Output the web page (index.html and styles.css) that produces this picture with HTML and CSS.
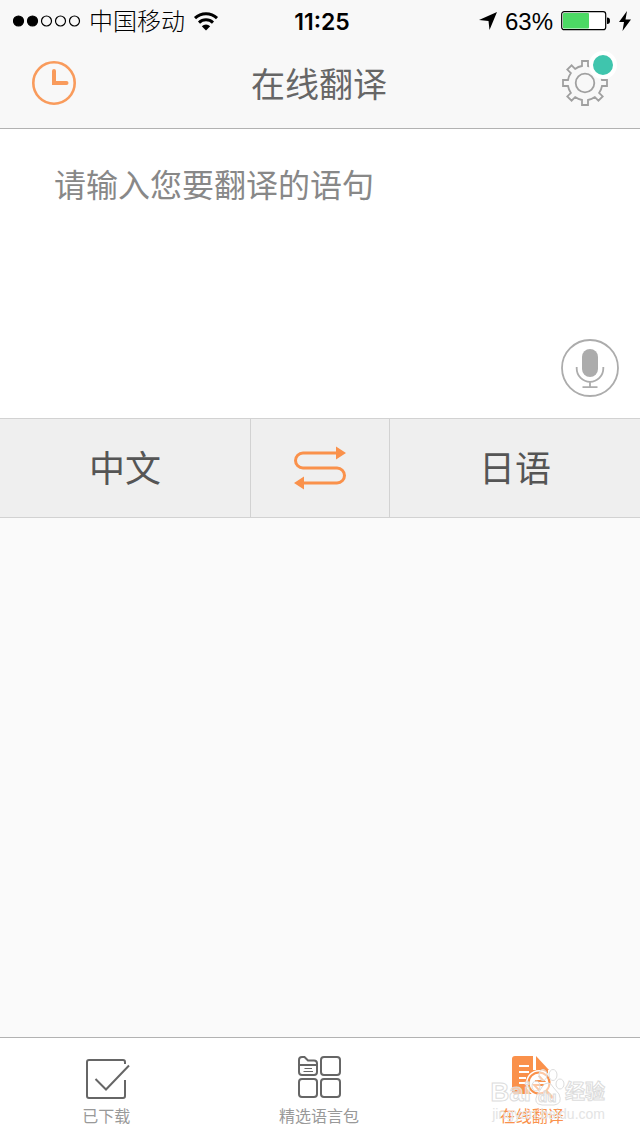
FILE: index.html
```html
<!DOCTYPE html>
<html lang="zh-CN">
<head>
    <meta charset="UTF-8">
    <meta name="viewport" content="width=device-width, initial-scale=1.0">
    <title>在线翻译</title>
    <link rel="stylesheet" href="styles.css">
</head>
<body>

    <header class="header">
        <div class="status">
            <div class="status-left">
                <svg width="68" height="14" viewBox="0 0 68 14" stroke="#000" stroke-width="1.2" fill="none">
                    <circle cx="5.5" cy="7" r="5" fill="#000"/>
                    <circle cx="19.5" cy="7" r="5" fill="#000"/>
                    <circle cx="33.5" cy="7" r="5"/>
                    <circle cx="47.5" cy="7" r="5"/>
                    <circle cx="61.5" cy="7" r="5"/>
                </svg>
                <span class="carrier">中国移动</span>
                <svg width="26" height="20" viewBox="0 0 26 20" fill="none" stroke="#000" stroke-width="3">
                    <path d="M2 7.2A16 16 0 0 1 24 7.2"/>
                    <path d="M6 11.6A10.2 10.2 0 0 1 20 11.6"/>
                    <path d="M13 19.5L8.8 15.2A6 6 0 0 1 17.2 15.2Z" fill="#000" stroke="none"/>
                </svg>
            </div>
            <span class="time">11:25</span>
            <div class="status-right">
                <svg width="18" height="18" viewBox="0 0 18 18"><path d="M18 0L10.5 18L9.5 9L0 8Z"/></svg>
                <span class="percent">63%</span>
                <svg width="50" height="20" viewBox="0 0 50 20">
                    <rect x="0.7" y="0.7" width="44" height="18" rx="2.5" fill="#fff" stroke="#000" stroke-width="1.2"/>
                    <rect x="2" y="2" width="26" height="15.4" rx="1" fill="#4cd964"/>
                    <path d="M46 6.5Q49 6.5 49 9.8T46 13Z"/>
                </svg>
                <svg width="12" height="20" viewBox="0 0 12 20"><path d="M8 0L0 11H5L3.5 20L12 8.5H6.5Z"/></svg>
            </div>
        </div>
        <div class="nav">
            <button class="icon-btn" aria-label="历史">
                <svg width="44" height="44" viewBox="0 0 44 44" fill="none" stroke="#f99b5c">
                    <circle cx="22" cy="22" r="20.7" stroke-width="2.6"/>
                    <path d="M22 10V22H34.5" stroke-width="4" stroke-linecap="round"/>
                </svg>
            </button>
            <h1>在线翻译</h1>
            <button class="icon-btn settings" aria-label="设置">
                <svg width="46" height="46" viewBox="-23 -23 46 46" fill="none" stroke="#a0a0a0" stroke-width="1.8">
                    <circle r="9.3"/>
                    <path d="M-3-17V-22H3V-17A17.3 17.3 0 0 1 9.9-14.1L13.4-17.7L17.7-13.4L14.1-9.9A17.3 17.3 0 0 1 17-3H22V3H17A17.3 17.3 0 0 1 14.1 9.9L17.7 13.4L13.4 17.7L9.9 14.1A17.3 17.3 0 0 1 3 17V22H-3V17A17.3 17.3 0 0 1-9.9 14.1L-13.4 17.7L-17.7 13.4L-14.1 9.9A17.3 17.3 0 0 1-17 3H-22V-3H-17A17.3 17.3 0 0 1-14.1-9.9L-17.7-13.4L-13.4-17.7L-9.9-14.1A17.3 17.3 0 0 1-3-17Z"/>
                </svg>
                <span class="badge"></span>
            </button>
        </div>
    </header>

    <main class="main">
        <div class="entry">
            <textarea class="sentence" aria-label="翻译语句" placeholder="请输入您要翻译的语句"></textarea>
            <button class="mic" aria-label="语音输入">
                <svg width="58" height="58" viewBox="0 0 58 58" fill="none" stroke="#acacac" stroke-width="1.8">
                    <circle cx="29" cy="29" r="28"/>
                    <rect x="21" y="10" width="16" height="28" rx="8" fill="#acacac" stroke="none"/>
                    <path d="M15.7 28V29.5A13.3 13.3 0 0 0 42.3 29.5V28M29 42.8V48M21.5 48.2H36.5"/>
                </svg>
            </button>
        </div>

        <div class="langs">
            <button class="lang">中文</button>
            <button class="swap" aria-label="交换语言">
                <svg width="52" height="44" viewBox="0 0 52 44" fill="none" stroke="#fa914b" stroke-width="3">
                    <path d="M42 7H9A7.5 7.5 0 0 0 9 22H43A7.5 7.5 0 0 1 43 37H10"/>
                    <path d="M42 0.5L52 7L42 13.5ZM10 30.5L0 37L10 43.5Z" fill="#fa914b" stroke="none"/>
                </svg>
            </button>
            <button class="lang">日语</button>
        </div>
    </main>

    <nav class="tabs">
        <a class="tab" href="#">
            <svg width="48" height="44" viewBox="0 0 48 44" fill="none" stroke="#666" stroke-width="2">
                <path d="M43 8V6Q43 4 41 4H7Q5 4 5 6V40Q5 42 7 42H41Q43 42 43 40V24"/>
                <path d="M13.5 23L24 33.5L47 9.5"/>
            </svg>
            <span>已下载</span>
        </a>
        <a class="tab" href="#">
            <svg width="44" height="44" viewBox="0 0 44 44" fill="none" stroke="#666" stroke-width="2">
                <path d="M2 4Q2 1 5 1H7.5L11 4.5H17Q20 4.5 20 7.5V16Q20 19 17 19H5Q2 19 2 16ZM2 9H20"/>
                <path d="M6.5 15.5H16M7.5 12.5H15" stroke-width="1"/>
                <rect x="24" y="1" width="19" height="18" rx="3"/>
                <rect x="2" y="23" width="18" height="18" rx="3"/>
                <rect x="24" y="23" width="19" height="18" rx="3"/>
            </svg>
            <span>精选语言包</span>
        </a>
        <a class="tab active" href="#">
            <svg width="44" height="44" viewBox="0 0 44 44">
                <path d="M5 0H23V14H38V38H5Q2 38 2 35V3Q2 0 5 0Z" fill="#fa914b"/>
                <path d="M26 0L39 14H26Z" fill="#fa914b"/>
                <path d="M9 10H19M9 16H19M9 22H16M9 27H16" stroke="#fff" stroke-width="2"/>
                <circle cx="29" cy="27" r="11" fill="#fff" stroke="#fff" stroke-width="4"/>
                <circle cx="29" cy="27" r="10.5" fill="none" stroke="#fa914b" stroke-width="2"/>
                <path d="M25 25H34L29 20M34 29H24L29 34" fill="none" stroke="#fa914b" stroke-width="1.8"/>
                <path d="M36 35L43 42" stroke="#fa914b" stroke-width="3"/>
            </svg>
            <span>在线翻译</span>
        </a>
        <div class="watermark">
            <div class="mark-name">
                <span>Bai</span>
                <svg width="34" height="38" viewBox="0 0 34 38" fill="#fff" fill-opacity="0.5" stroke="#dcdcdc">
                    <ellipse cx="5" cy="18" rx="4" ry="5"/>
                    <ellipse cx="12" cy="7" rx="4" ry="5.5"/>
                    <ellipse cx="22" cy="7" rx="4" ry="5.5"/>
                    <ellipse cx="29" cy="16" rx="4" ry="5"/>
                    <path d="M17 15Q20 15 22 19L28 26Q32 36 23 37H11Q2 36 6 27L11 19Q13 15 17 15Z"/>
                    <text x="7" y="34" class="mark-du">du</text>
                </svg>
                <span class="mark-cn">经验</span>
            </div>
            <div class="mark-url">jingyan.baidu.com</div>
        </div>
    </nav>

</body>
</html>
```
FILE: styles.css
```css
*{
    box-sizing: border-box;
}

body{
    margin: 0;
    min-height: 100vh;
    display: flex;
    flex-direction: column;
    background: #fafafa;
    font-family: "Noto Sans CJK SC", sans-serif;
}

button{
    padding: 0;
    border: 0;
    background: none;
    font-family: inherit;
    cursor: pointer;
}

svg{
    display: block;
    flex: none;
}

/* cabecera */
.header{
    background: #f8f8f8;
    border-bottom: 1px solid #b2b2b2;
}

.status{
    display: grid;
    grid-template-columns: 1fr auto 1fr;
    align-items: center;
    height: 40px;
    padding: 0 9px 0 13px;
    color: #000;
    font-family: "Liberation Sans", "Noto Sans CJK SC", sans-serif;
    font-size: 24px;
    line-height: 40px;
}

.status-left,
.status-right{
    display: flex;
    align-items: center;
    gap: 8px;
}

.status-right{
    justify-content: flex-end;
}

.carrier{
    padding-top: 2px;
    font-weight: 300;
}

.time{
    padding-top: 2px;
    font-size: 23px;
    font-weight: 600;
    font-family: Inter, "Liberation Sans", sans-serif;
}

.percent{
    padding-top: 2px;
}

.nav{
    display: flex;
    align-items: center;
    justify-content: space-between;
    height: 88px;
    padding: 0 32px 2px;
}

.nav h1{
    margin: 0;
    color: #666;
    font-size: 34px;
    font-weight: 400;
    line-height: 48px;
}

.settings{
    position: relative;
}

.badge{
    position: absolute;
    top: -9px;
    right: -9px;
    width: 28px;
    height: 28px;
    border: 4px solid #fff;
    border-radius: 50%;
    background: #3fc5ad;
}

/* texto a traducir */
.main{
    flex: 1;
}

.entry{
    display: flex;
    flex-direction: column;
    align-items: flex-end;
    padding: 30px 21px 21px 54px;
    background: #fff;
}

.sentence{
    width: 100%;
    height: 180px;
    padding: 0;
    border: 0;
    outline: 0;
    resize: none;
    background: none;
    color: #555;
    font-family: inherit;
    font-size: 32px;
    line-height: 48px;
}

.sentence::placeholder{
    color: #888;
    opacity: 1;
}

.langs{
    display: grid;
    grid-template-columns: 1fr 140px 1fr;
    height: 100px;
    border-top: 1px solid #d2d2d2;
    border-bottom: 1px solid #d2d2d2;
    background: #efefef;
}

.lang{
    padding-bottom: 4px;
    color: #555;
    font-size: 36px;
}

.swap{
    display: flex;
    align-items: center;
    justify-content: center;
    border-left: 1px solid #d2d2d2;
    border-right: 1px solid #d2d2d2;
}

/* pestañas */
.tabs{
    position: relative;
    display: grid;
    grid-template-columns: 1fr 1fr 1fr;
    height: 99px;
    padding: 18px 2px 0 0;
    border-top: 1px solid #b2b2b2;
    background: #fff;
}

.tab{
    display: flex;
    flex-direction: column;
    align-items: center;
    color: #999;
    font-size: 16px;
    line-height: 30px;
    text-decoration: none;
}

.active{
    color: #fa914b;
}

.watermark{
    position: absolute;
    right: 35px;
    bottom: 14px;
    color: rgba(255, 255, 255, 0.5);
    font-family: "Liberation Sans", "Noto Sans CJK SC", sans-serif;
    pointer-events: none;
}

.mark-name{
    display: flex;
    align-items: flex-end;
    justify-content: flex-end;
    font-size: 26px;
    font-weight: 700;
    line-height: 28px;
    -webkit-text-stroke: 1px #dcdcdc;
}

.mark-cn{
    font-size: 20px;
}

.mark-du{
    font-size: 15px;
}

.mark-url{
    color: #e4e4e4;
    font-size: 14px;
    line-height: 16px;
    text-align: right;
}
```
